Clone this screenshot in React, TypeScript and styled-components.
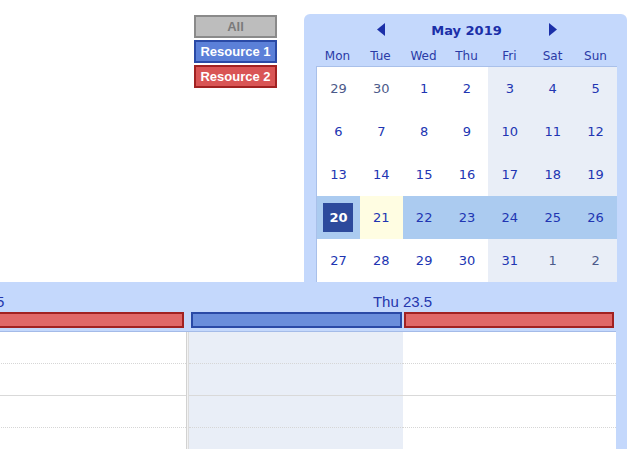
import React from 'react';
import styled, { createGlobalStyle, css } from 'styled-components';

const GlobalStyle = createGlobalStyle`
  html, body {
    margin: 0;
    padding: 0;
    background: #fff;
  }
  body {
    font-family: "Liberation Sans", Arial, sans-serif;
    overflow: hidden;
  }
`;

const PANEL = '#c4d8fc';
const NAV_TEXT = '#1b2fa8';
const DAY_WIDTH = 427;
const DAY_GAP = 3;

const Page = styled.div`
  width: 640px;
  height: 449px;
  overflow: hidden;
  display: flex;
  flex-direction: column;
`;

const Top = styled.div`
  display: flex;
  align-items: flex-start;
  height: 268px;
  padding-top: 14px;
`;

const Filters = styled.div`
  display: flex;
  flex-direction: column;
  gap: 2px;
  width: 83px;
  margin: 1px 0 0 194px;
`;

type Variant = 'all' | 'blue' | 'red';

const variants = {
  all: css`
    background: #bdbdbd;
    border-color: #8a8a8a;
    color: #7a7a7a;
  `,
  blue: css`
    background: #5b80d8;
    border-color: #2a4aa6;
    color: #fff;
  `,
  red: css`
    background: #d95555;
    border-color: #a12222;
    color: #fff;
  `
};

const FilterButton = styled.div<{ variant: Variant }>`
  box-sizing: border-box;
  height: 23px;
  border: 2px solid;
  display: flex;
  align-items: center;
  justify-content: center;
  font-size: 13px;
  font-weight: bold;
  ${(p) => variants[p.variant]}
`;

const NavPanel = styled.div`
  box-sizing: border-box;
  width: 323px;
  height: 268px;
  margin-left: 27px;
  padding: 0 10px 0 12px;
  background: ${PANEL};
  border-radius: 6px 6px 0 0;
  display: flex;
  flex-direction: column;
  font-family: "DejaVu Sans", Verdana, sans-serif;
`;

const SevenCols = styled.div`
  display: grid;
  grid-template-columns: repeat(7, 1fr);
  align-items: center;
  justify-items: center;
`;

const NavHeader = styled(SevenCols)`
  height: 31px;
`;

const NavTitle = styled.div`
  grid-column: 3 / 6;
  font-size: 13px;
  font-weight: bold;
  color: ${NAV_TEXT};
  padding-top: 1px;
`;

const Arrow = styled.svg<{ col: number }>`
  grid-column: ${(p) => p.col};
  display: block;
`;

const DayNames = styled(SevenCols)`
  height: 21px;
  font-size: 12px;
  color: #2a3aa6;
`;

const Weeks = styled.div`
  display: grid;
  grid-template-columns: repeat(7, 1fr);
  grid-auto-rows: 43px;
  border-top: 1px solid #a9c0ea;
  border-left: 1px solid #a9c0ea;
`;

type CellKind = 'plain' | 'weekend' | 'selected' | 'today';

const cellBg: Record<CellKind, string> = {
  plain: '#ffffff',
  weekend: '#e9eef7',
  selected: '#abcbf0',
  today: '#fffde2'
};

const DayCell = styled.div<{ kind: CellKind; other: boolean }>`
  display: flex;
  align-items: center;
  justify-content: center;
  background: ${(p) => cellBg[p.kind]};
  font-size: 13px;
  color: ${(p) => (p.other ? '#4c5a8a' : '#2135b2')};
`;

const ActiveDay = styled.div`
  width: 30px;
  height: 29px;
  display: flex;
  align-items: center;
  justify-content: center;
  background: #2d4a9c;
  color: #fff;
  font-weight: bold;
`;

const Scheduler = styled.div`
  box-sizing: border-box;
  width: 627px;
  height: 167px;
  padding-right: 11px;
  background: ${PANEL};
  overflow: hidden;
`;

const Track = styled.div`
  margin-left: -241px;
  width: ${DAY_WIDTH * 2 + DAY_GAP}px;
  display: flex;
  flex-direction: column;
`;

const HeaderRow = styled.div`
  display: flex;
  gap: ${DAY_GAP}px;
  height: 49px;
  border-bottom: 1px solid #a4bbe8;
`;

const DayHeader = styled.div`
  width: ${DAY_WIDTH}px;
  display: flex;
  flex-direction: column;
`;

const DayTitle = styled.div`
  height: 17px;
  padding-top: 11px;
  line-height: 17px;
  text-align: center;
  font-size: 15px;
  color: #2437ad;
`;

const ResourceBars = styled.div`
  display: flex;
  margin-top: 2px;
  padding: 0 1px;
`;

const ResourceBar = styled.div<{ color: 'blue' | 'red' }>`
  flex: 1;
  box-sizing: border-box;
  height: 16px;
  margin: 0 1px;
  border: 2px solid ${(p) => (p.color === 'blue' ? '#2a4aa6' : '#a12222')};
  background: ${(p) => (p.color === 'blue' ? '#6a8edb' : '#e06868')};
`;

const BodyRow = styled.div`
  display: flex;
  background: #fff;
  height: 117px;
`;

const DayBody = styled.div`
  width: ${DAY_WIDTH}px;
  display: flex;
`;

const DaySeparator = styled.div`
  box-sizing: border-box;
  width: ${DAY_GAP}px;
  border-left: 1px solid #d2d2d2;
  border-right: 1px solid #dcdcdc;
  background: #f2f2f2;
`;

const ResourceColumn = styled.div<{ shaded: boolean }>`
  flex: 1;
  display: flex;
  flex-direction: column;
  background: ${(p) => (p.shaded ? '#e9eef7' : '#fff')};
`;

const Slot = styled.div<{ half: boolean }>`
  flex: none;
  height: 31px;
  border-bottom: 1px ${(p) => (p.half ? 'dotted #d6d6d6' : 'solid #d9d9d9')};
`;

const dayNames = ['Mon', 'Tue', 'Wed', 'Thu', 'Fri', 'Sat', 'Sun'];

const weeks = [
  [29, 30, 1, 2, 3, 4, 5],
  [6, 7, 8, 9, 10, 11, 12],
  [13, 14, 15, 16, 17, 18, 19],
  [20, 21, 22, 23, 24, 25, 26],
  [27, 28, 29, 30, 31, 1, 2]
];

const days = [
  { title: 'Wed 22.5', resources: [false, false] },
  { title: 'Thu 23.5', resources: [true, false] }
];

const resourceColors: ('blue' | 'red')[] = ['blue', 'red'];

const cellKind = (week: number, col: number): CellKind => {
  if (week === 3) return col === 1 ? 'today' : 'selected';
  return col >= 4 ? 'weekend' : 'plain';
};

const isOther = (week: number, day: number) =>
  (week === 0 && day > 20) || (week === 4 && day < 10);

const App: React.FC = () => (
  <Page>
    <GlobalStyle />
    <Top>
      <Filters>
        <FilterButton variant='all'>All</FilterButton>
        <FilterButton variant='blue'>Resource 1</FilterButton>
        <FilterButton variant='red'>Resource 2</FilterButton>
      </Filters>
      <NavPanel>
        <NavHeader>
          <Arrow col={2} width='8' height='13' viewBox='0 0 8 13'>
            <path d='M8 0 L0 6.5 L8 13 Z' fill={NAV_TEXT} />
          </Arrow>
          <NavTitle>May 2019</NavTitle>
          <Arrow col={6} width='8' height='13' viewBox='0 0 8 13'>
            <path d='M0 0 L8 6.5 L0 13 Z' fill={NAV_TEXT} />
          </Arrow>
        </NavHeader>
        <DayNames>
          {dayNames.map((name) => (
            <div key={name}>{name}</div>
          ))}
        </DayNames>
        <Weeks>
          {weeks.map((week, w) =>
            week.map((day, c) => (
              <DayCell
                key={`${w}-${c}`}
                kind={cellKind(w, c)}
                other={isOther(w, day)}
              >
                {w === 3 && c === 0 ? <ActiveDay>{day}</ActiveDay> : day}
              </DayCell>
            ))
          )}
        </Weeks>
      </NavPanel>
    </Top>
    <Scheduler>
      <Track>
        <HeaderRow>
          {days.map((day) => (
            <DayHeader key={day.title}>
              <DayTitle>{day.title}</DayTitle>
              <ResourceBars>
                {resourceColors.map((color) => (
                  <ResourceBar key={color} color={color} />
                ))}
              </ResourceBars>
            </DayHeader>
          ))}
        </HeaderRow>
        <BodyRow>
          {days.map((day, i) => (
            <React.Fragment key={day.title}>
              {i > 0 && <DaySeparator />}
              <DayBody>
                {day.resources.map((shaded, r) => (
                  <ResourceColumn key={r} shaded={shaded}>
                    {[true, false, true, false].map((half, s) => (
                      <Slot key={s} half={half} />
                    ))}
                  </ResourceColumn>
                ))}
              </DayBody>
            </React.Fragment>
          ))}
        </BodyRow>
      </Track>
    </Scheduler>
  </Page>
);

export default App;
